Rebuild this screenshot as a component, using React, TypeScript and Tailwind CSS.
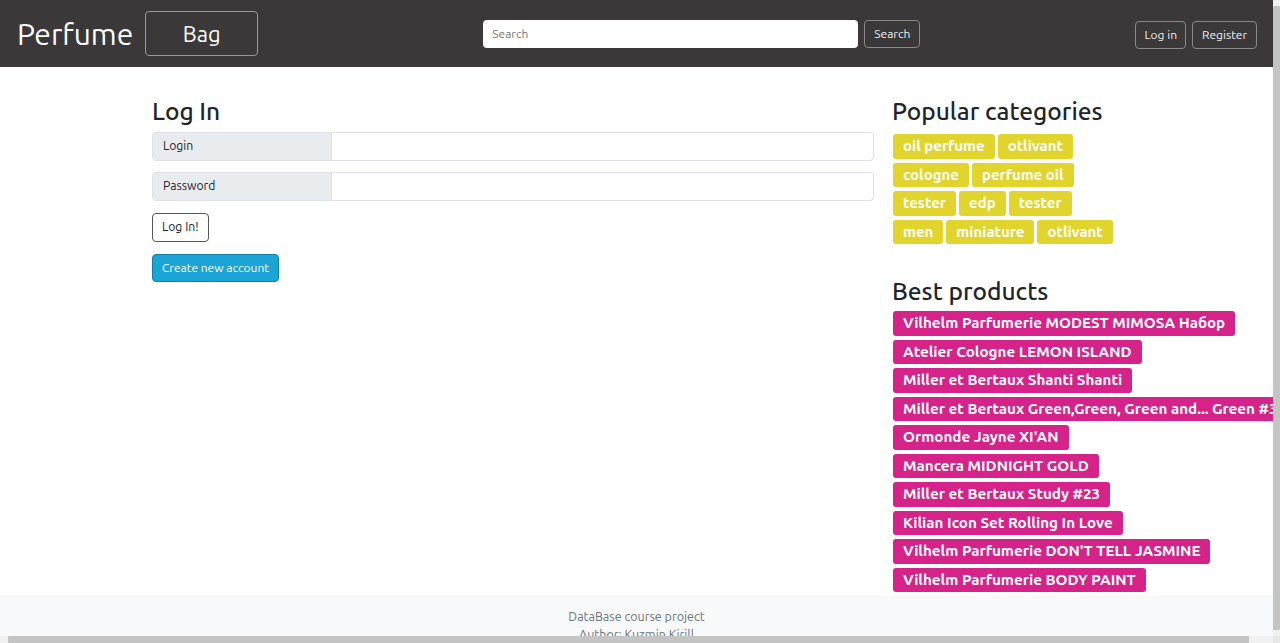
import React from 'react';

const categoryRows: string[][] = [
  ['oil perfume', 'otlivant'],
  ['cologne', 'perfume oil'],
  ['tester', 'edp', 'tester'],
  ['men', 'miniature', 'otlivant'],
];

const bestProducts: string[] = [
  'Vilhelm Parfumerie MODEST MIMOSA Набор',
  'Atelier Cologne LEMON ISLAND',
  'Miller et Bertaux Shanti Shanti',
  'Miller et Bertaux Green,Green, Green and... Green #3',
  "Ormonde Jayne XI'AN",
  'Mancera MIDNIGHT GOLD',
  'Miller et Bertaux Study #23',
  'Kilian Icon Set Rolling In Love',
  "Vilhelm Parfumerie DON'T TELL JASMINE",
  'Vilhelm Parfumerie BODY PAINT',
];

const App: React.FC = () => {
  return (
    <div
      className="h-screen w-full flex flex-col overflow-hidden bg-white text-[#212529]"
      style={{ fontFamily: '"Ubuntu", "Noto Sans", "Open Sans", sans-serif' }}
    >
      <div className="flex flex-1 min-h-0">
        {/* Page */}
        <div className="flex-1 min-w-0 overflow-hidden flex flex-col">
          {/* Navbar */}
          <nav className="h-[67px] shrink-0 bg-[#3a3838] flex items-center pl-[17px] pr-[16px]">
            <span className="text-white text-[30px] leading-none mr-[12px]">Perfume</span>
            <button className="w-[113px] h-[45px] border border-[#9a9898] rounded-[4px] text-white text-[22px] leading-none">
              Bag
            </button>
            <div className="flex items-center ml-[225px]">
              <input
                placeholder="Search"
                className="w-[375px] h-[28px] bg-white rounded-[4px] px-[9px] text-[12px] placeholder:text-[#757575] outline-none"
              />
              <button className="ml-[6px] h-[28px] px-[9px] border border-[#8a8888] rounded-[4px] text-[#f0f0f0] text-[12px]">
                Search
              </button>
            </div>
            <div className="flex-1" />
            <div className="flex items-center gap-[6px] mt-[3px]">
              <button className="h-[28px] px-[8px] border border-[#8a8888] rounded-[4px] text-[#f0f0f0] text-[12px]">
                Log in
              </button>
              <button className="h-[28px] px-[9px] border border-[#8a8888] rounded-[4px] text-[#f0f0f0] text-[12px]">
                Register
              </button>
            </div>
          </nav>

          {/* Content */}
          <main className="flex pl-[152px] pt-[28px] shrink-0">
            <section className="w-[722px] shrink-0">
              <h1 className="text-[24.5px] leading-[32px] font-medium mb-[5px]">Log In</h1>
              <div className="flex h-[29px] mb-[11px]">
                <div className="w-[180px] bg-[#e9ecef] border border-[#dee2e6] rounded-l-[4px] flex items-center px-[10px] text-[12.2px]">
                  Login
                </div>
                <input className="flex-1 border border-l-0 border-[#dee2e6] rounded-r-[4px] outline-none px-[10px] text-[13px]" />
              </div>
              <div className="flex h-[29px] mb-[12px]">
                <div className="w-[180px] bg-[#e9ecef] border border-[#dee2e6] rounded-l-[4px] flex items-center px-[10px] text-[12.2px]">
                  Password
                </div>
                <input
                  type="password"
                  className="flex-1 border border-l-0 border-[#dee2e6] rounded-r-[4px] outline-none px-[10px] text-[13px]"
                />
              </div>
              <button className="block h-[29px] px-[9px] border border-[#555] rounded-[4px] bg-white text-[12.2px] mb-[12px]">
                Log In!
              </button>
              <button className="block h-[28px] px-[9px] border border-[#1480a8] rounded-[4px] bg-[#1ba4d6] text-white text-[12px]">
                Create new account
              </button>
            </section>

            <aside className="ml-[18px] flex-1 min-w-0">
              <h2 className="text-[24.5px] leading-[32px] font-medium mb-[7px]">Popular categories</h2>
              <div className="flex flex-col gap-[4px]">
                {categoryRows.map((row, i) => (
                  <div key={i} className="flex gap-[3px] pl-[1px]">
                    {row.map((c, j) => (
                      <span
                        key={j}
                        className="h-[24.5px] px-[10px] rounded-[3px] bg-[#e1d52d] text-white font-bold text-[15px] leading-[24.5px] whitespace-nowrap"
                      >
                        {c}
                      </span>
                    ))}
                  </div>
                ))}
              </div>

              <h2 className="text-[24.5px] leading-[32px] font-medium mt-[31px] mb-[4px]">Best products</h2>
              <div className="flex flex-col items-start gap-[4px] pl-[1px]">
                {bestProducts.map((p, i) => (
                  <span
                    key={i}
                    className="h-[24.5px] px-[10px] rounded-[3px] bg-[#d5238a] text-white font-bold text-[15.2px] leading-[24.5px] whitespace-nowrap"
                  >
                    {p}
                  </span>
                ))}
              </div>
            </aside>
          </main>

          {/* Footer */}
          <footer className="mt-[3px] bg-[#f8f9fa] flex-1 text-center text-[#6c757d] text-[12.5px] leading-[18px] pt-[12px]">
            <p>DataBase course project</p>
            <p>Author: Kuzmin Kirill</p>
          </footer>
        </div>

        {/* Vertical scrollbar */}
        <div className="w-[7px] shrink-0 bg-[#f1f1f1] flex flex-col pt-[6px] pb-[6px]">
          <div className="flex-1 bg-[#c4c4c4] rounded-[1px]" />
        </div>
      </div>

      {/* Horizontal scrollbar */}
      <div className="h-[7px] shrink-0 flex bg-[#f1f1f1]">
        <div className="flex-1 flex pl-[8px] pr-[24px]">
          <div className="flex-1 bg-[#c4c4c4] rounded-[1px]" />
        </div>
        <div className="w-[7px] bg-[#e8e8e8]" />
      </div>
    </div>
  );
};

export default App;
